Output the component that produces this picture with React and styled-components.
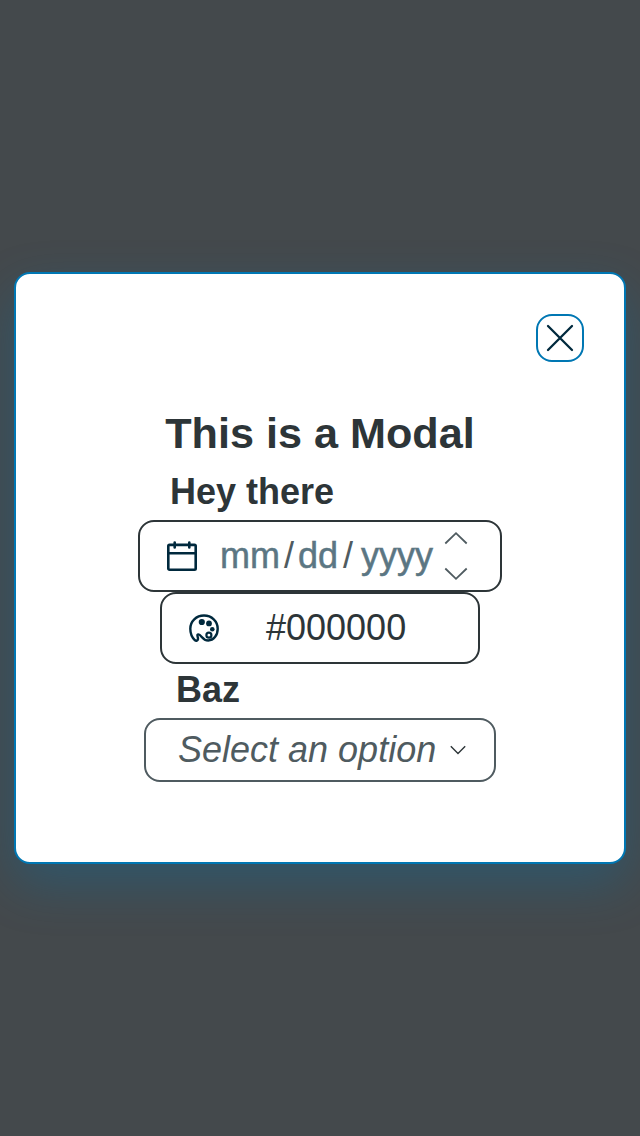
import React from "react";
import styled, { createGlobalStyle } from "styled-components";

const Global = createGlobalStyle`
  * { box-sizing: border-box; }
  body { margin: 0; font-family: "Liberation Sans", Arial, sans-serif; font-size: 36px; color: #2d3538; background: #44494c; }
`;
const Overlay = styled.main`
  min-height: 100vh; display: flex; align-items: center; justify-content: center;
  background: #44494c; overflow: hidden;
`;
const Dialog = styled.section`
  width: 612px; height: 592px; padding: 40px; border: 2px solid #0077b3; border-radius: 16px;
  background: #fff; box-shadow: 0 20px 50px rgba(0, 119, 179, 0.3);
  display: flex; flex-direction: column; align-items: center;
`;
const CloseButton = styled.button`
  align-self: flex-end; width: 48px; height: 48px; padding: 0; border: 2px solid #0077b3; border-radius: 16px;
  background: #fff; color: #00293d; display: grid; place-items: center;
`;
const Title = styled.h1`
  margin: 46px 0 0; font-size: 43.2px; line-height: 50px; font-weight: 700; white-space: nowrap;
`;
const Label = styled.label`
  align-self: stretch; font-weight: 700; line-height: 42px; margin-top: ${(p) => p.$top}px; padding-left: ${(p) => p.$indent}px;
`;
const Field = styled.div`
  width: ${(p) => p.$width}px; height: ${(p) => p.$height || 72}px; margin-top: ${(p) => p.$top || 0}px;
  padding-left: ${(p) => p.$pad}px; flex: none;
  border: 2px solid ${(p) => p.$border || "#2d3538"}; border-radius: 16px;
  display: flex; align-items: center; line-height: 42px; white-space: nowrap;
`;
const Icon = styled.svg`
  width: ${(p) => p.$size}px; height: ${(p) => p.$size}px; display: block; flex: none;
  color: #00293d; fill: none; stroke: currentColor; stroke-linecap: round; stroke-linejoin: round;
`;
const DateParts = styled.div`
  display: flex; margin-left: 20px; color: #4f5b60;
`;
const Part = styled.span`
  padding: 0 2px; color: #5b7683; -webkit-text-stroke: 0.5px #5b7683;
`;
const Slash = styled.span`
  margin: 0 ${(p) => p.$after}px 0 ${(p) => p.$before}px;
`;
const Stepper = styled.div`
  display: flex; flex-direction: column; justify-content: space-between; height: 52px; margin-left: 9px; color: #4f5b60;
`;
const Arrow = styled.svg`
  display: block; width: ${(p) => p.$w}px; height: ${(p) => p.$h}px; fill: none; stroke: currentColor;
`;
const HexValue = styled.span`
  margin-left: 46px;
`;
const Placeholder = styled.span`
  font-style: italic; color: #4f5b60; margin-right: 14px;
`;

export default function App() {
  return (
    <>
      <Global />
      <Overlay>
        <Dialog role="dialog" aria-label="This is a Modal">
          <CloseButton aria-label="Close">
            <Icon $size={32} viewBox="0 0 32 32" strokeWidth="2.3"><path d="M4 4 28 28M28 4 4 28" /></Icon>
          </CloseButton>
          <Title>This is a Modal</Title>
          <Label $top={13} $indent={114}>Hey there</Label>
          <Field $width={364} $top={7} $pad={26}>
            <Icon $size={32} viewBox="0 0 32 32" strokeWidth="2.6">
              <rect x="2.3" y="4.9" width="27.4" height="24.8" rx="1.2" />
              <path d="M2.3 13.3H29.7M8.7 2.500v5M23.3 2.500v5" />
            </Icon>
            <DateParts>
              <Part>mm</Part><Slash $before={2} $after={2}>/</Slash>
              <Part>dd</Part><Slash $before={3} $after={6}>/</Slash>
              <Part>yyyy</Part>
            </DateParts>
            <Stepper>
              <Arrow $w={24} $h={16} viewBox="0 0 24 16" strokeWidth="1.8"><path d="M1.3 13.5 12 3.2l10.7 10.3" /></Arrow>
              <Arrow $w={24} $h={16} viewBox="0 0 24 16" strokeWidth="1.8"><path d="M1.3 2.5 12 12.8 22.7 2.5" /></Arrow>
            </Stepper>
          </Field>
          <Field $width={320} $pad={26}>
            <Icon $size={32} viewBox="0 0 32 32" strokeWidth="2.4">
              <path d="M7 28.3C4 25.5 2.3 21.3 2.3 16.7 2.3 9.200 8.3 3.5 16 3.5S29.7 9.200 29.7 16.700c0 6.700-4.200 11.800-9.400 11.800-3.300 0-5.200-1.800-6.800-3.800-1.200-1.500-2.700-2.800-3.800-2.100-1.200.8.6 2.600.3 4.400-.2 1.500-1.800 2.200-3 1.300Z" />
              <g fill="currentColor" stroke="none"><circle cx="13.8" cy="10" r="3.1" /><circle cx="21" cy="11.400" r="2.900" /><circle cx="24.3" cy="17.2" r="2.300" /></g>
              <circle cx="20.900" cy="23.200" r="2.500" strokeWidth="2.200" />
            </Icon>
            <HexValue>#000000</HexValue>
          </Field>
          <Label $top={5} $indent={120}>Baz</Label>
          <Field $width={352} $height={64} $top={7} $pad={32} $border="#4f5b60">
            <Placeholder>Select an option</Placeholder>
            <Arrow $w={16} $h={10} viewBox="0 0 16 10" strokeWidth="1.4"><path d="m.8 1.200 7.200 7.200 7.200-7.200" /></Arrow>
          </Field>
        </Dialog>
      </Overlay>
    </>
  );
}
